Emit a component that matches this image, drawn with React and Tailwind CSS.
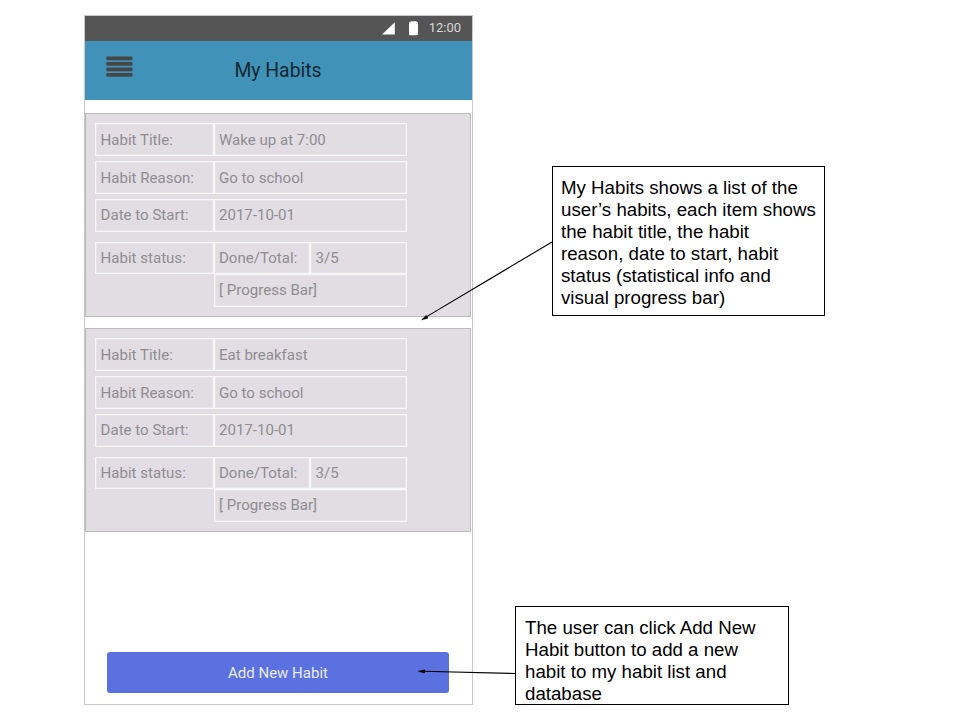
const cell =
  "border border-[#f8f7f8] shadow-[inset_0_0_0_1px_#e7e4e9] flex items-center whitespace-pre";

function Row({ label, value, className = "pt-[2px]" }) {
  return (
    <div className="flex">
      <div className={`${cell} h-[33px] w-[119px] pl-[4.6px] ${className}`}>{label}</div>
      <div className={`${cell} h-[33px] w-[193px] pl-[4px] ${className}`}>{value}</div>
    </div>
  );
}

function HabitCard({ title, reason, date, status }) {
  return (
    <section className="h-[204px] w-[386px] border border-[#bcbabd] bg-[#e1dde3] pl-[9px] pt-[9px] text-[15.05px] text-[#8f8d90]">
      <div className="flex flex-col gap-[5px]">
        <Row label="Habit Title:" value={title} />
        <Row label="Habit Reason:" value={reason} />
        <Row label="Date to Start:" value={date} className="pt-0" />
      </div>
      <div className="mt-[10px] flex items-start">
        <div className={`${cell} h-[32px] w-[119px] pl-[4.6px] pt-px`}>Habit status:</div>
        <div>
          <div className="flex">
            <div className={`${cell} h-[32px] w-[96px] pl-[4px] pt-px`}>Done/Total:</div>
            <div className={`${cell} h-[32px] w-[97px] pl-[4.6px] pt-px`}>{status}</div>
          </div>
          <div className={`${cell} h-[33px] w-[193px] pl-[4px]`}>[ Progress Bar]</div>
        </div>
      </div>
    </section>
  );
}

function Note({ lines, className }) {
  return (
    <aside
      className={`shrink-0 border border-black bg-white pt-[10px] font-['Liberation_Sans',Arial,sans-serif] text-[18.7px] leading-[22px] text-black ${className}`}
    >
      {lines.map((line) => (
        <p key={line} className="whitespace-nowrap">{line}</p>
      ))}
    </aside>
  );
}

export default function App() {
  return (
    <main className="relative flex h-[720px] w-[960px] overflow-hidden bg-white pl-[84px] pt-[15px] font-[Roboto,sans-serif]">
      <div className="flex h-[690px] w-[389px] shrink-0 flex-col border border-[#c9c9c9] bg-white">
        <div className="flex h-[25px] shrink-0 items-center justify-end bg-[#555555] pb-px pr-[11px] text-[13px] text-[#d8d8d8]">
          <svg width="14" height="13" viewBox="0 0 14 13" className="mr-[13px]">
            <path d="M0 12.5 12.8 0.3V12.5Z" fill="#fff" />
          </svg>
          <svg width="10" height="15" viewBox="0 0 10 15" className="mr-[10px]">
            <path d="M2 .2H7.2L8 1.1Q9 1.2 9 2.3V13.2Q9 14.2 7.9 14.2H1.1Q0 14.2 0 13.2V2.3Q0 1.2 1.1 1.1Z" fill="#fff" />
          </svg>
          <span>12:00</span>
        </div>
        <header className="relative flex h-[59px] shrink-0 items-center justify-center bg-[#4092b8] pr-px pt-px text-[19.4px] text-[#142830]">
          <svg width="28" height="23" viewBox="0 0 28 23" className="absolute left-[21px] top-[15px]" fill="#464646">
            <rect x=".3" y=".5" width="26.2" height="3.8" rx="1" />
            <rect x=".3" y="6" width="26.2" height="3.8" rx="1" />
            <rect x=".3" y="11.4" width="26.2" height="3.8" rx="1" />
            <rect x=".3" y="16.9" width="26.2" height="3.8" rx="1" />
          </svg>
          <h1>My Habits</h1>
        </header>
        <div className="mt-[13px] flex flex-col gap-[11px]">
          <HabitCard title="Wake up at 7:00" reason="Go to school" date="2017-10-01" status="3/5" />
          <HabitCard title="Eat breakfast" reason="Go to school" date="2017-10-01" status="3/5" />
        </div>
        <button className="mb-[11px] ml-[22px] mt-auto h-[41px] w-[342px] shrink-0 rounded-[3px] bg-[#5b71df] pt-px text-[15px] text-[#e8ebfb]">
          Add New Habit
        </button>
      </div>
      <div className="flex flex-col pl-[42px] pt-[151px]">
        <Note
          className="ml-[37px] h-[150px] w-[273px] pl-[8px]"
          lines={[
            "My Habits shows a list of the",
            "user’s habits, each item shows",
            "the habit title, the habit",
            "reason, date to start, habit",
            "status (statistical info and",
            "visual progress bar)",
          ]}
        />
        <Note
          className="mt-[290px] h-[99px] w-[274px] pl-[9px]"
          lines={[
            "The user can click Add New",
            "Habit button to add a new",
            "habit to my habit list and",
            "database",
          ]}
        />
      </div>
      <svg width="960" height="720" viewBox="0 0 960 720" className="pointer-events-none absolute left-0 top-0">
        <g stroke="#000" strokeWidth="1.1" fill="#000">
          <path d="M552 242 425 317.6" />
          <path d="M426.2 315.4 421.7 319.8 427.8 318.2Z" strokeWidth=".6" />
          <path d="M515 673.5 423 671.3" />
          <path d="M424.5 669.8 418.5 671.2 424.5 673Z" strokeWidth=".6" />
        </g>
      </svg>
    </main>
  );
}
